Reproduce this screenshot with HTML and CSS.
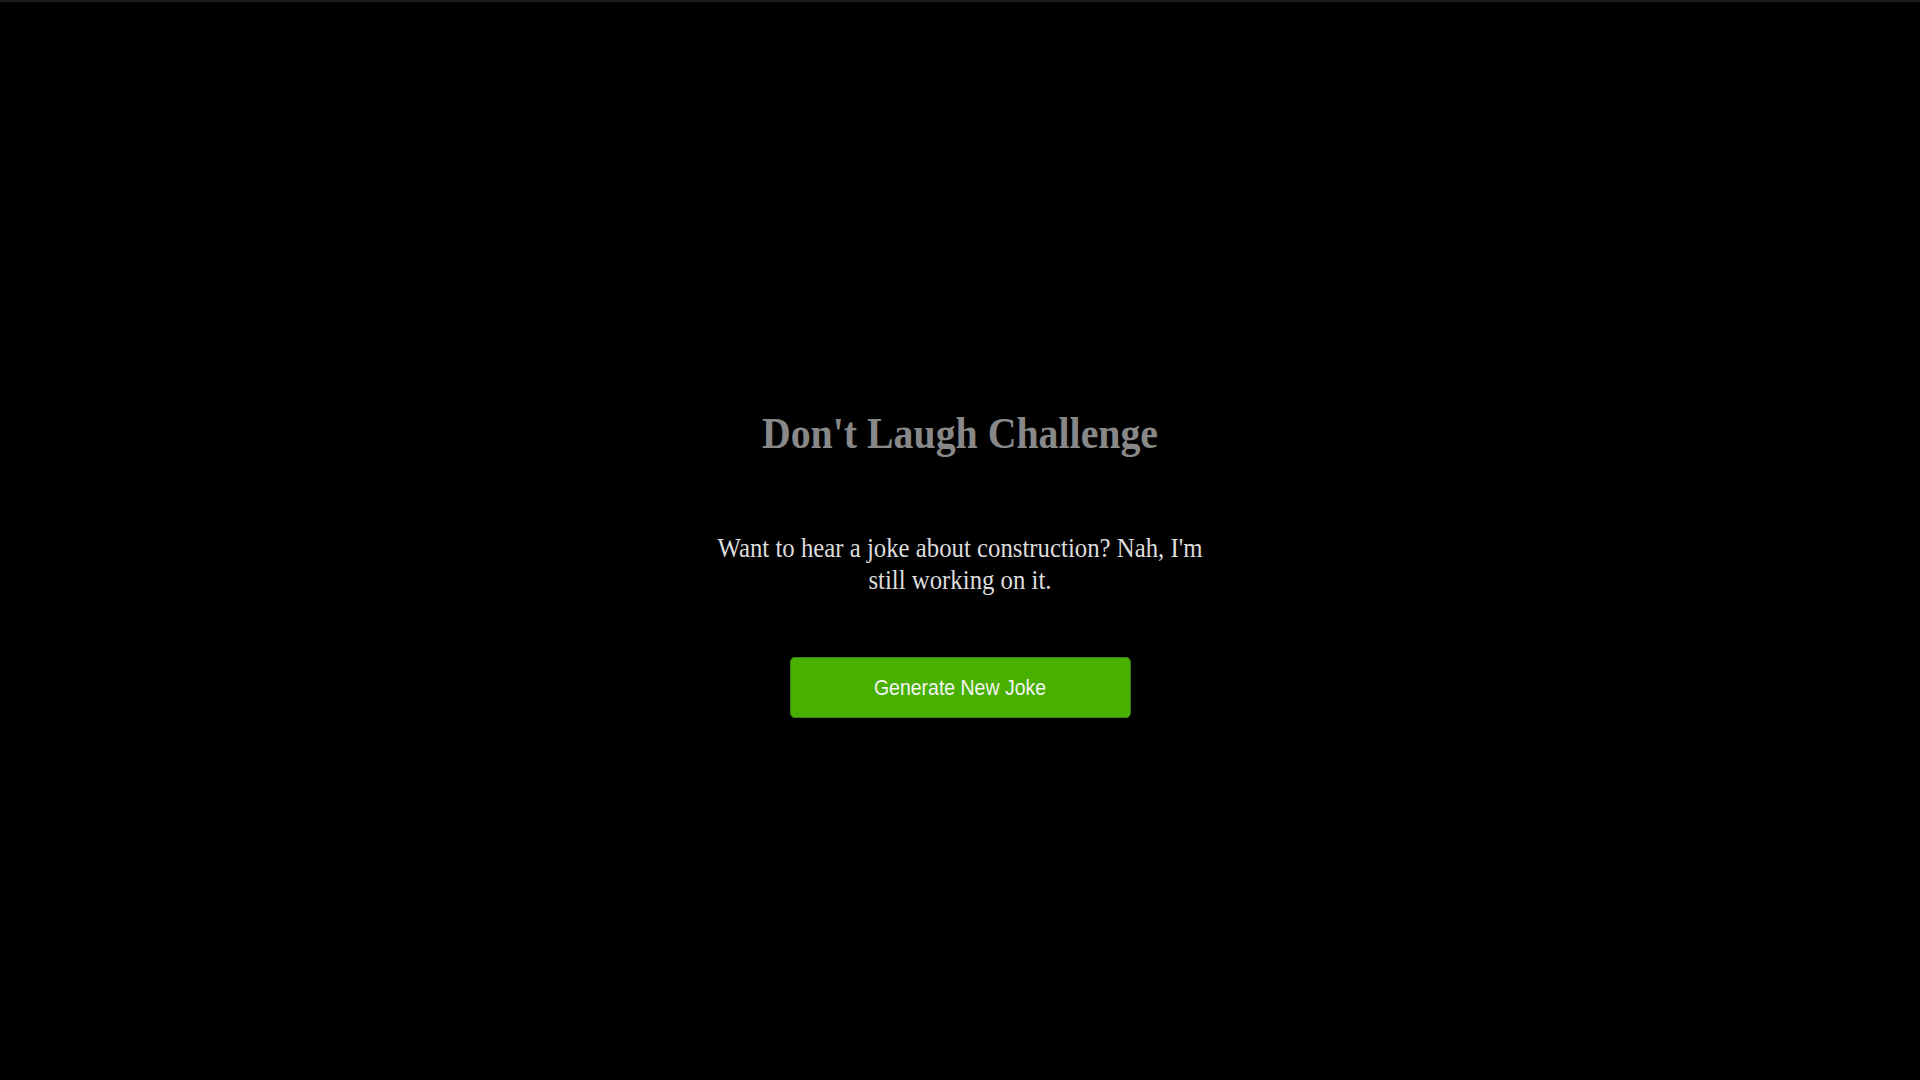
FILE: index.html
```html
<!DOCTYPE html>
<html>
<head>
<meta charset="utf-8">
<link rel="stylesheet" href="styles.css">
</head>
<body>
<main class="page">
  <div class="card">
    <h1 class="title">Don't Laugh Challenge</h1>
    <p class="joke">Want to hear a joke about construction? Nah, I'm still working on it.</p>
    <button class="btn">Generate New Joke</button>
  </div>
</main>
</body>
</html>
```
FILE: styles.css
```css
html, body {
  margin: 0;
  padding: 0;
  background: #000;
}
body {
  font-family: "Liberation Serif", "Times New Roman", serif;
  border-top: 2px solid #1c1c1c;
}
.page {
  min-height: 1078px;
  display: flex;
  justify-content: center;
  padding-top: 405px;
  box-sizing: border-box;
}
.card {
  width: 580px;
  display: flex;
  flex-direction: column;
  align-items: center;
  text-align: center;
  transform: scaleX(0.885);
  transform-origin: center top;
}
.title {
  margin: 0;
  font-size: 45px;
  font-weight: bold;
  color: #888;
  line-height: 52px;
}
.joke {
  margin: 73px 0 0;
  font-size: 28px;
  line-height: 32px;
  color: #ddd;
}
.btn {
  margin-top: 61px;
  width: 385px;
  height: 61px;
  background: #47b000;
  color: #f4f4f4;
  border: 1px solid #3d8a14;
  border-radius: 5px;
  font-family: "Liberation Sans", Arial, sans-serif;
  font-size: 22px;
}
```
